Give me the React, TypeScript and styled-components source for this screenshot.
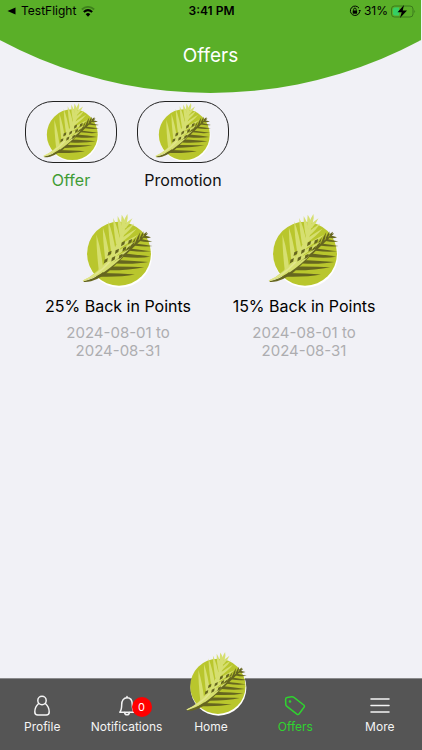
import React from 'react';
import styled, { createGlobalStyle } from 'styled-components';

const GlobalStyle = createGlobalStyle`
  * { box-sizing: border-box; }
  html, body { margin: 0; background: #f1f1f6; }
  body { font-family: Inter, "Liberation Sans", sans-serif; color: #000; }
  button, a { font: inherit; color: inherit; text-decoration: none; }
  svg { display: block; flex: none; }
`;

const Screen = styled.div`
  min-height: 100vh;
  display: flex;
  flex-direction: column;
`;

const Header = styled.header`
  height: 93px;
  margin-right: 1px;
  background: #5aaf28;
  clip-path: circle(446px at 50% -353px);
`;

const StatusBar = styled.div`
  display: grid;
  grid-template-columns: 1fr auto 1fr;
  align-items: center;
  height: 22px;
  padding: 0 5px 0 7px;
  font-size: 12px;
  line-height: 16px;
`;

const StatusGroup = styled.div<{ $end?: boolean }>`
  display: flex;
  align-items: center;
  gap: ${(p) => (p.$end ? 3 : 5)}px;
  justify-content: ${(p) => (p.$end ? 'flex-end' : 'flex-start')};
`;

const Clock = styled.time`
  font-weight: 600;
`;

const Title = styled.h1`
  margin: 22px 0 0;
  text-align: center;
  font-size: 19px;
  line-height: 24px;
  font-weight: 400;
  color: #fff;
`;

const Main = styled.main`
  flex: 1;
  padding: 8px 25px 0;
`;

const Tabs = styled.div`
  display: flex;
  gap: 20px;
`;

const Tab = styled.button<{ $active?: boolean }>`
  display: flex;
  flex-direction: column;
  align-items: center;
  gap: 7px;
  width: 92px;
  padding: 0;
  border: 0;
  background: none;
  font-size: 16px;
  line-height: 20px;
  color: ${(p) => (p.$active ? '#3f9c35' : '#111')};
`;

const Pill = styled.span`
  display: flex;
  align-items: center;
  justify-content: center;
  width: 100%;
  height: 62px;
  border: 1px solid #222;
  border-radius: 28px;
`;

const Cards = styled.div`
  display: grid;
  grid-template-columns: 1fr 1fr;
  margin-top: 24px;
`;

const Card = styled.article`
  display: flex;
  flex-direction: column;
  align-items: center;
  text-align: center;
`;

const CardTitle = styled.h2`
  margin: 8px 0 0;
  font-size: 16px;
  line-height: 20px;
  font-weight: 400;
`;

const CardDates = styled.p`
  width: 120px;
  margin: 8px 0 0;
  font-size: 15px;
  line-height: 18px;
  color: #adadb0;
`;

const Nav = styled.nav`
  position: sticky;
  bottom: 0;
  display: grid;
  grid-template-columns: repeat(5, 1fr);
  height: 72px;
  background: #555;
  border-top: 1px solid #8a8a8c;
`;

const NavItem = styled.a<{ $active?: boolean }>`
  position: relative;
  display: flex;
  flex-direction: column;
  align-items: center;
  justify-content: flex-end;
  gap: 2px;
  padding-bottom: 15px;
  font-size: 12px;
  line-height: 16px;
  && { color: ${(p) => (p.$active ? '#2fd32f' : '#f4f4f4')}; }
`;

const Badge = styled.span`
  position: absolute;
  top: 18px;
  left: calc(50% + 5px);
  width: 20px;
  height: 20px;
  border-radius: 50%;
  background: #f00;
  color: #fff;
  font-size: 11px;
  line-height: 20px;
  text-align: center;
`;

const HomeMark = styled.span`
  position: absolute;
  top: -27px;
  left: calc(50% - 26px);
`;

type Point = [number, number];

/** A leaflet that is wide at the stem and tapers to its tip. */
const leaflet = ([bx, by]: Point, [tx, ty]: Point, w: number, bow: number) => {
  const dx = tx - bx;
  const dy = ty - by;
  const len = Math.hypot(dx, dy);
  const nx = -dy / len;
  const ny = dx / len;
  const at = (t: number, off: number) => `${bx + dx * t + nx * off} ${by + dy * t + ny * off}`;
  return `M${at(0, -w / 2)}Q${at(0.6, bow - w / 2)} ${tx} ${ty}Q${at(0.6, bow + w / 2)} ${at(0, w / 2)}Z`;
};

const paleLeft: [Point, Point][] = [
  [[80, 200], [66, 92]],
  [[100, 172], [85, 70]],
  [[117, 145], [101, 52]],
  [[131, 118], [116, 42]],
  [[142, 94], [129, 36]],
  [[148, 72], [141, 32]],
];
const paleRight: [Point, Point][] = [
  [[84, 200], [146, 154]],
  [[98, 179], [165, 133]],
  [[111, 157], [180, 112]],
  [[123, 135], [190, 92]],
  [[134, 113], [185, 74]],
  [[142, 91], [178, 58]],
  [[148, 70], [173, 43]],
  [[151, 56], [158, 30]],
];
const darkRight: [Point, Point][] = [
  [[80, 211], [180, 210]],
  [[104, 192], [208, 188]],
  [[126, 172], [220, 173]],
  [[146, 152], [226, 157]],
  [[164, 136], [229, 141]],
  [[181, 121], [232, 125]],
  [[195, 107], [232, 112]],
  [[206, 97], [228, 99]],
];
const darkLeft: [Point, Point][] = [
  [[152, 148], [168, 117]],
  [[168, 132], [183, 99]],
  [[184, 117], [196, 84]],
  [[197, 104], [206, 81]],
  [[208, 94], [216, 83]],
];
const gaps: Point[] = [
  [105, 147], [127, 141], [149, 134],
  [94, 169], [116, 163], [138, 156],
  [145, 118], [166, 112],
];

function PalmMark({ size }: { size: number }) {
  return (
    <svg width={size} height={size} viewBox="20 30 220 220" overflow="visible" aria-hidden="true">
      <circle cx="135" cy="153" r="96" fill="#fff" />
      <circle cx="133" cy="148" r="95" fill="#b9c62d" />
      <g fill="#66661f">
        <path d="M27 229Q59 226 92 196L152 139L217 87L219 89Q159 145 116 187Q86 220 50 230Q36 233 29 232Z" />
        {darkLeft.map(([a, b], i) => <path key={i} d={leaflet(a, b, 7, 0)} />)}
        {darkRight.map(([a, b], i) => <path key={i} d={leaflet(a, b, i < 4 ? 11 : 7, 2)} />)}
      </g>
      <g fill="#d6df70">
        {paleLeft.map(([a, b], i) => <path key={i} d={leaflet(a, b, 14, 1)} />)}
        {paleRight.map(([a, b], i) => <path key={i} d={leaflet(a, b, 10, 1)} />)}
        <path d="M25 228Q70 208 104 158Q137 109 149 49L153 50Q150 112 123 163Q91 212 28 230Z" />
      </g>
      <g fill="#66661f">
        {gaps.map(([x, y], i) => (
          <path key={i} d={`M${x - 6} ${y + 8}L${x - 4} ${y - 3}L${x + 6} ${y - 8}L${x + 4} ${y + 2}Z`} />
        ))}
      </g>
      <path d="M25 228Q66 211 103 171L107 174Q72 214 28 229Z" fill="#e2e68e" />
    </svg>
  );
}

const Wifi = () => (
  <svg width="14" height="11" viewBox="0 0 14 11" fill="none" aria-label="Wi-Fi">
    <path d="M.8 3.5Q7-1.8 13.2 3.5" stroke="#3f811d" strokeWidth="1.7" />
    <path d="M2.8 6Q7 2.3 11.2 6" stroke="#000" strokeWidth="2" />
    <path d="M4.7 8.2Q7 6 9.3 8.2L7 10.7Z" fill="#000" />
  </svg>
);

const RotationLock = () => (
  <svg width="12" height="12" viewBox="0 0 12 12" fill="none" stroke="#000" aria-label="Rotation lock">
    <path d="M10 3.2A4.7 4.7 0 1 0 10.6 7" />
    <path d="M9.5 5L11.8 5L10.9 7.5Z" fill="#000" stroke="none" />
    <rect x="3.7" y="5.5" width="4.4" height="3.2" fill="#000" stroke="none" />
    <path d="M4.6 5.7V4.4A1.3 1.3 0 0 1 7.2 4.4V5.7" strokeWidth=".9" />
  </svg>
);

const Battery = () => (
  <svg width="25" height="13" viewBox="0 0 25 13" aria-label="Charging">
    <rect x=".5" y="1" width="21.5" height="11" rx="3" fill="none" stroke="#3b7a1c" />
    <path d="M4 2.5H8V10.5H4Q2 10.5 2 8.5V4.5Q2 2.5 4 2.5Z" fill="#35cf63" />
    <path d="M13 0L6.5 7.2H10.7L9 13L16 5.5H11.7Z" fill="#000" />
    <path d="M23.4 4.8Q25 6.5 23.4 8.2Z" fill="#3b7a1c" />
  </svg>
);

const BackArrow = () => (
  <svg width="9" height="8" viewBox="0 0 9 8" aria-hidden="true">
    <path d="M.5 4L8.5.5V7.5Z" />
  </svg>
);

const Icon = styled.svg.attrs({ width: 22, height: 22, viewBox: '0 0 22 22', 'aria-hidden': true })`
  fill: none;
  stroke: currentColor;
  stroke-width: 1.5;
  stroke-linecap: round;
  stroke-linejoin: round;
`;

const offers = [
  { title: '25% Back in Points', from: '2024-08-01', to: '2024-08-31' },
  { title: '15% Back in Points', from: '2024-08-01', to: '2024-08-31' },
];

export default function App() {
  return (
    <Screen>
      <GlobalStyle />
      <Header>
        <StatusBar>
          <StatusGroup>
            <BackArrow />
            <span>TestFlight</span>
            <Wifi />
          </StatusGroup>
          <Clock>3:41 PM</Clock>
          <StatusGroup $end>
            <RotationLock />
            <span>31%</span>
            <Battery />
          </StatusGroup>
        </StatusBar>
        <Title>Offers</Title>
      </Header>
      <Main>
        <Tabs>
          <Tab type="button" $active aria-pressed="true">
            <Pill><PalmMark size={59} /></Pill>
            Offer
          </Tab>
          <Tab type="button" aria-pressed="false">
            <Pill><PalmMark size={59} /></Pill>
            Promotion
          </Tab>
        </Tabs>
        <Cards>
          {offers.map((o) => (
            <Card key={o.title}>
              <PalmMark size={74} />
              <CardTitle>{o.title}</CardTitle>
              <CardDates>{o.from} to {o.to}</CardDates>
            </Card>
          ))}
        </Cards>
      </Main>
      <Nav>
        <NavItem href="#profile">
          <Icon>
            <circle cx="11" cy="5.5" r="4.2" />
            <path d="M7.6 8.5C4.5 11.2 3.8 14.2 3.8 17Q3.8 20 6.8 20H15.2Q18.2 20 18.2 17C18.2 14.2 17.5 11.2 14.4 8.5" />
          </Icon>
          Profile
        </NavItem>
        <NavItem href="#notifications">
          <Icon>
            <path d="M3.8 17.2Q5.7 15 5.7 9.5C5.7 5.5 7.7 2.8 11 2.8S16.3 5.5 16.3 9.5Q16.3 15 18.2 17.2Z" />
            <path d="M11 2.6V1.6M8.5 17.5Q9 19.8 11 19.8T13.5 17.5" />
          </Icon>
          Notifications
          <Badge>0</Badge>
        </NavItem>
        <NavItem href="#home">
          <HomeMark><PalmMark size={64} /></HomeMark>
          Home
        </NavItem>
        <NavItem href="#offers" $active>
          <Icon>
            <path d="M3.2 2.5L7.5 1.8Q8.8 1.6 9.9 2.4L19.7 10Q21 11 20 12.3L15.2 18.8Q14.2 20 12.9 19.1L2.9 11.4Q1.9 10.6 1.8 9.4L1.6 4.3Q1.6 2.8 3.2 2.5Z" />
            <circle cx="6" cy="6.5" r=".6" />
          </Icon>
          Offers
        </NavItem>
        <NavItem href="#more">
          <Icon>
            <path d="M2 4H20M2 10.5H20M2 17H20" />
          </Icon>
          More
        </NavItem>
      </Nav>
    </Screen>
  );
}
